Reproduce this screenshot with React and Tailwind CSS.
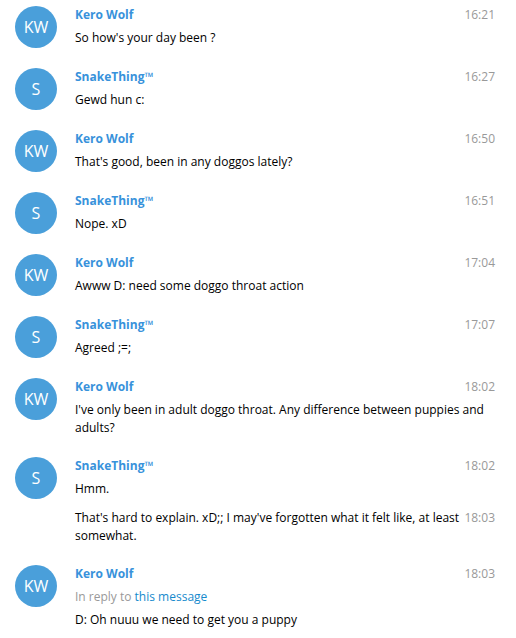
import React from "react";

const messages = [
  { id: 1, from: "Kero Wolf", initials: "KW", time: "16:21", text: "So how's your day been ?" },
  { id: 2, from: "SnakeThing™", initials: "S", time: "16:27", text: "Gewd hun c:" },
  { id: 3, from: "Kero Wolf", initials: "KW", time: "16:50", text: "That's good, been in any doggos lately?" },
  { id: 4, from: "SnakeThing™", initials: "S", time: "16:51", text: "Nope. xD" },
  { id: 5, from: "Kero Wolf", initials: "KW", time: "17:04", text: "Awww D: need some doggo throat action" },
  { id: 6, from: "SnakeThing™", initials: "S", time: "17:07", text: "Agreed ;=;" },
  {
    id: 7,
    from: "Kero Wolf",
    initials: "KW",
    time: "18:02",
    text: "I've only been in adult doggo throat. Any difference between puppies and adults?",
  },
  {
    id: 8,
    from: "SnakeThing™",
    initials: "S",
    time: "18:02",
    text: "Hmm.",
    joined: [
      {
        time: "18:03",
        text: "That's hard to explain. xD;; I may've forgotten what it felt like, at least somewhat.",
      },
    ],
  },
  {
    id: 9,
    from: "Kero Wolf",
    initials: "KW",
    time: "18:03",
    reply: true,
    text: "D: Oh nuuu we need to get you a puppy",
  },
];

const Message = ({ msg, first }) => (
  <div>
    <div className={`flex ${first ? "pt-[6px]" : "pt-[10px]"} pb-[10px]`}>
      {/* USERPIC */}
      <div className="w-[42px] h-[42px] shrink-0 rounded-full bg-[#4a9fda] text-white text-[16px] leading-[42px] text-center">
        {msg.initials}
      </div>

      {/* BODY */}
      <div className="ml-[18px] flex-1 min-w-0">
        <div className="flex justify-between pb-[5px] leading-[18px]">
          <span className="font-bold text-[#3892db]">{msg.from}</span>
          <span className="text-[#999999]">{msg.time}</span>
        </div>
        {msg.reply && (
          <div className="pb-[5px] leading-[18px] text-[#999999]">
            In reply to <span className="text-[#168acd]">this message</span>
          </div>
        )}
        <div className="leading-[18px] text-black">{msg.text}</div>
      </div>
    </div>

    {/* JOINED MESSAGES */}
    {msg.joined &&
      msg.joined.map((j, i) => (
        <div key={i} className="pb-[10px] pl-[60px] leading-[18px] text-black">
          <span className="float-right ml-[4px] text-[#999999]">{j.time}</span>
          {j.text}
        </div>
      ))}
  </div>
);

export default function App() {
  return (
    <div
      className="w-[516px] h-[638px] overflow-hidden bg-white text-[12px] pl-[15px] pr-[21px]"
      style={{ fontFamily: "'Open Sans', 'Liberation Sans', Arial, sans-serif" }}
    >
      {messages.map((m, i) => (
        <Message key={m.id} msg={m} first={i === 0} />
      ))}
    </div>
  );
}
